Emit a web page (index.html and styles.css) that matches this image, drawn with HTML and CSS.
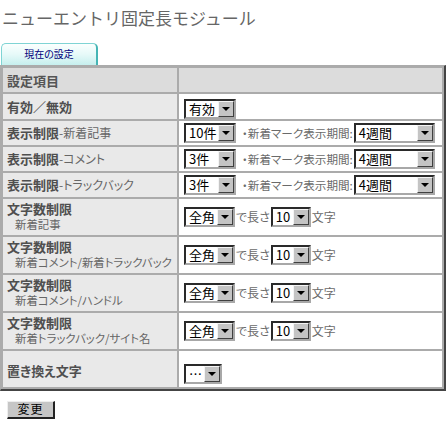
FILE: index.html
```html
<!DOCTYPE html>
<html lang="ja">
<head>
<meta charset="utf-8">
<title>ニューエントリ固定長モジュール</title>
<link rel="stylesheet" href="styles.css">
</head>
<body>
<h1 class="title">ニューエントリ固定長モジュール</h1>
<div class="tabs"><span class="tab">現在の設定</span></div>
<table class="cfg">
  <tr class="head">
    <th class="lbl">設定項目</th>
    <th class="val-cell"></th>
  </tr>
  <tr class="single">
    <td class="lbl"><b>有効／無効</b></td>
    <td class="val-cell"><span class="sel w52"><span class="opt">有効</span><span class="arr"></span></span></td>
  </tr>
  <tr class="single">
    <td class="lbl"><b>表示制限</b>-新着記事</td>
    <td class="val-cell"><div class="line"><span class="sel w52"><span class="opt">10件</span><span class="arr"></span></span><span class="txt dot">・新着マーク表示期間:</span><span class="sel w81"><span class="opt">4週間</span><span class="arr"></span></span></div></td>
  </tr>
  <tr class="single">
    <td class="lbl"><b>表示制限</b>-コメント</td>
    <td class="val-cell"><div class="line"><span class="sel w52"><span class="opt">3件</span><span class="arr"></span></span><span class="txt dot">・新着マーク表示期間:</span><span class="sel w81"><span class="opt">4週間</span><span class="arr"></span></span></div></td>
  </tr>
  <tr class="single">
    <td class="lbl"><b>表示制限</b>-トラックバック</td>
    <td class="val-cell"><div class="line"><span class="sel w52"><span class="opt">3件</span><span class="arr"></span></span><span class="txt dot">・新着マーク表示期間:</span><span class="sel w81"><span class="opt">4週間</span><span class="arr"></span></span></div></td>
  </tr>
  <tr class="double">
    <td class="lbl"><b>文字数制限</b><br><span class="sub">新着記事</span></td>
    <td class="val-cell"><div class="line"><span class="sel w51"><span class="opt">全角</span><span class="arr"></span></span><span class="txt">で長さ</span><span class="sel w40"><span class="opt">10</span><span class="arr"></span></span><span class="txt">文字</span></div></td>
  </tr>
  <tr class="double">
    <td class="lbl"><b>文字数制限</b><br><span class="sub">新着コメント/新着トラックバック</span></td>
    <td class="val-cell"><div class="line"><span class="sel w51"><span class="opt">全角</span><span class="arr"></span></span><span class="txt">で長さ</span><span class="sel w40"><span class="opt">10</span><span class="arr"></span></span><span class="txt">文字</span></div></td>
  </tr>
  <tr class="double">
    <td class="lbl"><b>文字数制限</b><br><span class="sub">新着コメント/ハンドル</span></td>
    <td class="val-cell"><div class="line"><span class="sel w51"><span class="opt">全角</span><span class="arr"></span></span><span class="txt">で長さ</span><span class="sel w40"><span class="opt">10</span><span class="arr"></span></span><span class="txt">文字</span></div></td>
  </tr>
  <tr class="double">
    <td class="lbl"><b>文字数制限</b><br><span class="sub">新着トラックバック/サイト名</span></td>
    <td class="val-cell"><div class="line"><span class="sel w51"><span class="opt">全角</span><span class="arr"></span></span><span class="txt">で長さ</span><span class="sel w40"><span class="opt">10</span><span class="arr"></span></span><span class="txt">文字</span></div></td>
  </tr>
  <tr class="last">
    <td class="lbl"><b>置き換え文字</b></td>
    <td class="val-cell"><span class="sel w38"><span class="opt">…</span><span class="arr"></span></span></td>
  </tr>
</table>
<div class="actions"><button class="btn" type="button">変更</button></div>
</body>
</html>
```

FILE: styles.css
```css
body {
  margin: 0;
  width: 448px;
  background: #fff;
  font-family: "Noto Sans CJK JP", "Noto Sans", sans-serif;
  color: #666;
}

.title {
  margin: 0;
  padding: 6px 0 0 2px;
  font-size: 17px;
  line-height: 24px;
  font-weight: normal;
  color: #666;
}

.tabs {
  margin-top: 13px;
  padding-left: 1px;
  height: 22px;
  display: flex;
}

.tab {
  box-sizing: border-box;
  width: 97px;
  height: 22px;
  border: 1px solid #7fd4d4;
  border-right: 2px solid #45b5b5;
  border-bottom: none;
  border-radius: 5px 5px 0 0;
  background: linear-gradient(#fbfffe 0%, #e6f9f8 50%, #c6efee 100%);
  color: #00007a;
  font-size: 10px;
  line-height: 20px;
  text-align: center;
  font-feature-settings: "palt";
}

.cfg {
  width: 446px;
  border-collapse: separate;
  border-spacing: 2px;
  background: #ababab;
  border-style: solid;
  border-width: 1px 2px 2px 1px;
  border-color: #ababab #444 #444 #ababab;
}

.cfg th,
.cfg td {
  padding: 0;
  vertical-align: middle;
  text-align: left;
}

.lbl {
  width: 170px;
  padding-left: 4px !important;
  background: #e9e9e9;
  font-size: 12px;
  line-height: 15px;
  color: #666;
  font-feature-settings: "palt";
  white-space: nowrap;
}

.lbl b {
  font-size: 13px;
  color: #4f4f4f;
}

.sub {
  padding-left: 8px;
  font-size: 11.4px;
}

.head th {
  height: 24px;
  background: #dcdcdc;
}

.head th.lbl {
  font-size: 13px;
  font-weight: bold;
  color: #555;
}

.val-cell {
  width: 258px;
  padding-left: 5px !important;
  background: #fff;
}

.single td { height: 24px; }
.double td { height: 36px; }
.last td {
  height: 32px;
  padding-top: 4px !important;
}
.last td.val-cell {
  height: 30px;
  padding-top: 6px !important;
}

.line {
  display: flex;
  align-items: center;
}

.txt {
  font-size: 12px;
  line-height: 16px;
  color: #6a6a6a;
  font-feature-settings: "palt";
  margin: 0 1px;
  white-space: nowrap;
}

.txt.dot {
  font-size: 11.6px;
  margin: 0 1px 0 6px;
}

.sel {
  display: inline-flex;
  box-sizing: border-box;
  height: 20px;
  border: 2px solid;
  border-color: #2a2a2a #a8a8a8 #a8a8a8 #2a2a2a;
  background: #fff;
  vertical-align: middle;
  flex: none;
}

.w52 { width: 52px; }
.w51 { width: 51px; }
.w81 { width: 81px; }
.w40 { width: 40px; }
.w38 { width: 38px; }

.opt {
  flex: 1;
  padding-left: 3px;
  font-size: 13px;
  line-height: 16px;
  color: #000;
  white-space: nowrap;
}

.arr {
  box-sizing: border-box;
  width: 16px;
  height: 16px;
  background: #c4c4c4;
  border: 1px solid;
  border-color: #f4f4f4 #404040 #404040 #f4f4f4;
  display: flex;
  align-items: center;
  justify-content: center;
  flex: none;
}

.arr::after {
  content: "";
  width: 0;
  height: 0;
  border-left: 4px solid transparent;
  border-right: 4px solid transparent;
  border-top: 4px solid #000;
}

.actions {
  margin-top: 10px;
  padding-left: 7px;
}

.btn {
  display: block;
  box-sizing: border-box;
  width: 48px;
  height: 18px;
  padding: 0;
  margin: 0;
  border: 1px solid;
  border-width: 1px 2px 2px 1px;
  border-color: #eee #222 #222 #eee;
  background: #c6c6c6;
  font-family: "Noto Sans CJK JP", sans-serif;
  font-size: 12px;
  line-height: 14px;
  letter-spacing: 1px;
  color: #000;
}
```
